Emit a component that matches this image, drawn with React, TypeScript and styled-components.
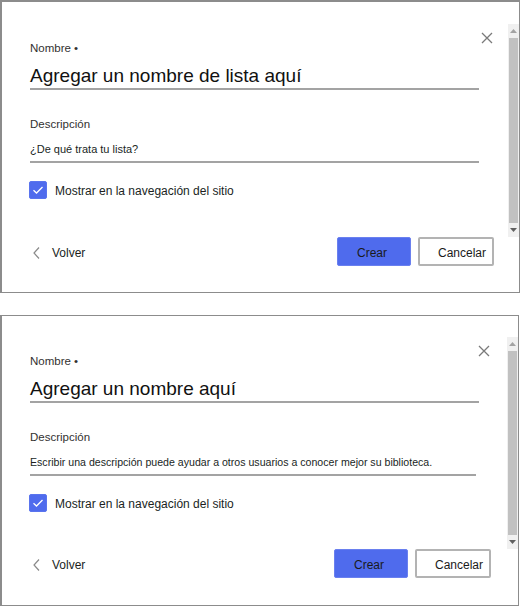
import React from "react";
import styled, { createGlobalStyle } from "styled-components";

const Global = createGlobalStyle`
  html, body { margin: 0; padding: 0; background: #ffffff; }
  body { font-family: "Liberation Sans", Arial, sans-serif; color: #201f1e; }
  * { box-sizing: border-box; }
`;

const Page = styled.div`
  width: 520px;
  display: flex;
  flex-direction: column;
  gap: 22px;
`;

type PanelCfg = {
  width: number;
  borderTop: number;
  mainHeight: number;
  scrollTop: number;
  scrollHeight: number;
  bodyTop: number;
  closeRight: number;
  titleInset: number;
  descInset: number;
  bottomPad: number;
  footerLeft: number;
  footerRight: number;
};

const PanelBox = styled.section<{ $c: PanelCfg }>`
  width: ${(p) => p.$c.width}px;
  border-style: solid;
  border-color: #8c8c8c;
  border-width: ${(p) => p.$c.borderTop}px 1px 1px 2px;
  background: #fff;
  display: flex;
  flex-direction: column;
  padding-bottom: ${(p) => p.$c.bottomPad}px;
`;

const MainRow = styled.div<{ $h: number }>`
  height: ${(p) => p.$h}px;
  display: flex;
  align-items: flex-start;
`;

const Body = styled.div<{ $top: number; $right: number }>`
  flex: 1;
  display: flex;
  flex-direction: column;
  padding: ${(p) => p.$top}px ${(p) => p.$right}px 0 28px;
`;

const TopRow = styled.div`
  display: flex;
  justify-content: space-between;
  align-items: flex-start;
`;

const Label = styled.div<{ $mt: number }>`
  margin-top: ${(p) => p.$mt}px;
  font-size: 11.5px;
  line-height: 16px;
  color: #323130;
`;

const CloseButton = styled.button`
  width: 12px;
  height: 12px;
  padding: 0;
  border: 0;
  background: transparent;
  display: flex;
  align-items: center;
  justify-content: center;
  cursor: pointer;
`;

const Field = styled.div<{ $mt: number; $inset: number; $pb: number }>`
  margin-top: ${(p) => p.$mt}px;
  margin-right: ${(p) => p.$inset}px;
  padding-bottom: ${(p) => p.$pb}px;
  border-bottom: 2px solid #a3a3a3;
`;

const TitleText = styled.div`
  font-size: 19px;
  line-height: 24px;
  color: #111;
  white-space: nowrap;
`;

const DescText = styled.div<{ $small?: boolean }>`
  font-size: ${(p) => (p.$small ? "10.6px" : "11px")};
  line-height: 16px;
  color: #201f1e;
  white-space: nowrap;
`;

const CheckRow = styled.label`
  margin-top: 18px;
  display: flex;
  align-items: center;
  gap: 8px;
  font-size: 12px;
  color: #201f1e;
  margin-left: -1px;
`;

const CheckText = styled.span`
  padding-top: 2px;
`;

const CheckBox = styled.span`
  width: 18px;
  height: 18px;
  border-radius: 2px;
  background: #4f6bed;
  border: 1px solid #5a74ee;
  display: flex;
  align-items: center;
  justify-content: center;
`;

const ScrollTrack = styled.div<{ $top: number; $h: number }>`
  margin-top: ${(p) => p.$top}px;
  height: ${(p) => p.$h}px;
  width: 11px;
  background: #f0f0f0;
  display: flex;
  flex-direction: column;
  align-items: center;
`;

const ScrollArrow = styled.div`
  height: 14px;
  width: 100%;
  display: flex;
  align-items: center;
  justify-content: center;
`;

const ScrollThumb = styled.div`
  flex: 1;
  width: 9px;
  background: #c1c1c1;
`;

const Footer = styled.div<{ $left: number; $right: number }>`
  height: 29px;
  display: flex;
  align-items: center;
  padding: 0 ${(p) => p.$right}px 0 ${(p) => p.$left}px;
`;

const BackLink = styled.button`
  display: flex;
  align-items: center;
  gap: 12px;
  border: 0;
  background: transparent;
  padding: 0;
  font-family: inherit;
  font-size: 12px;
  color: #201f1e;
  margin-top: 3px;
`;

const Spacer = styled.div`
  flex: 1;
`;

const Button = styled.button<{ $primary?: boolean }>`
  height: 29px;
  width: ${(p) => (p.$primary ? 74 : 76)}px;
  margin-left: ${(p) => (p.$primary ? 0 : 7)}px;
  padding: ${(p) => (p.$primary ? "2px 0 0 19px" : "3px 0 0 18px")};
  text-align: left;
  font-family: inherit;
  font-size: 12px;
  color: #1a1a1a;
  border-radius: 2px;
  background: ${(p) => (p.$primary ? "#4f6bed" : "#ffffff")};
  border: ${(p) => (p.$primary ? "1px solid #6a80ef" : "2px solid #b3b3b3")};
`;

const CloseIcon = () => (
  <svg width="12" height="12" viewBox="0 0 12 12">
    <path d="M1 1 L11 11 M11 1 L1 11" stroke="#7a7a7a" strokeWidth="1.3" fill="none" />
  </svg>
);

const CheckIcon = () => (
  <svg width="12" height="10" viewBox="0 0 12 10">
    <path d="M1.5 5.2 L4.5 8 L10.5 2" stroke="#fff" strokeWidth="1.3" fill="none" />
  </svg>
);

const ChevronLeft = () => (
  <svg width="7" height="12" viewBox="0 0 7 12">
    <path d="M6 0.5 L1 6 L6 11.5" stroke="#8a8a8a" strokeWidth="1.2" fill="none" />
  </svg>
);

const ArrowUp = () => (
  <svg width="7" height="4" viewBox="0 0 7 4">
    <path d="M0 4 L3.5 0 L7 4 Z" fill="#a3a3a3" />
  </svg>
);

const ArrowDown = () => (
  <svg width="7" height="4" viewBox="0 0 7 4">
    <path d="M0 0 L3.5 4 L7 0 Z" fill="#606060" />
  </svg>
);

type DialogProps = {
  cfg: PanelCfg;
  title: string;
  desc: string;
  smallDesc?: boolean;
};

const Dialog = ({ cfg, title, desc, smallDesc }: DialogProps) => (
  <PanelBox $c={cfg}>
    <MainRow $h={cfg.mainHeight}>
      <Body $top={cfg.bodyTop} $right={cfg.closeRight}>
        <TopRow>
          <Label $mt={8}>Nombre •</Label>
          <CloseButton aria-label="Cerrar">
            <CloseIcon />
          </CloseButton>
        </TopRow>
        <Field $mt={8} $inset={cfg.titleInset} $pb={0}>
          <TitleText>{title}</TitleText>
        </Field>
        <Label $mt={26}>Descripción</Label>
        <Field $mt={9} $inset={cfg.descInset} $pb={4}>
          <DescText $small={smallDesc}>{desc}</DescText>
        </Field>
        <CheckRow>
          <CheckBox>
            <CheckIcon />
          </CheckBox>
          <CheckText>Mostrar en la navegación del sitio</CheckText>
        </CheckRow>
      </Body>
      <ScrollTrack $top={cfg.scrollTop} $h={cfg.scrollHeight}>
        <ScrollArrow>
          <ArrowUp />
        </ScrollArrow>
        <ScrollThumb />
        <ScrollArrow>
          <ArrowDown />
        </ScrollArrow>
      </ScrollTrack>
    </MainRow>
    <Footer $left={cfg.footerLeft} $right={cfg.footerRight}>
      <BackLink>
        <ChevronLeft />
        Volver
      </BackLink>
      <Spacer />
      <Button $primary>Crear</Button>
      <Button>Cancelar</Button>
    </Footer>
  </PanelBox>
);

const first: PanelCfg = {
  width: 520,
  borderTop: 2,
  mainHeight: 235,
  scrollTop: 22,
  scrollHeight: 213,
  bodyTop: 30,
  closeRight: 15,
  titleInset: 14,
  descInset: 14,
  bottomPad: 26,
  footerLeft: 31,
  footerRight: 25,
};

const second: PanelCfg = {
  width: 519,
  borderTop: 1,
  mainHeight: 233,
  scrollTop: 21,
  scrollHeight: 212,
  bodyTop: 29,
  closeRight: 17,
  titleInset: 11,
  descInset: 14,
  bottomPad: 27,
  footerLeft: 31,
  footerRight: 27,
};

export default function App() {
  return (
    <>
      <Global />
      <Page>
        <Dialog
          cfg={first}
          title="Agregar un nombre de lista aquí"
          desc="¿De qué trata tu lista?"
        />
        <Dialog
          cfg={second}
          title="Agregar un nombre aquí"
          desc="Escribir una descripción puede ayudar a otros usuarios a conocer mejor su biblioteca."
          smallDesc
        />
      </Page>
    </>
  );
}
